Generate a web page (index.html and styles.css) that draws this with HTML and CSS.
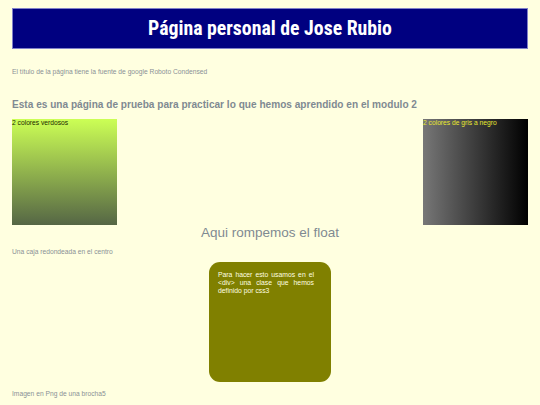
FILE: index.html
```html
<!DOCTYPE html>
<html lang="es">
<head>
<meta charset="utf-8">
<title>Página personal de Jose Rubio</title>
<link rel="stylesheet" href="styles.css">
</head>
<body>
<div class="page">
  <header class="banner"><h1 class="title">Página personal de Jose Rubio</h1></header>
  <p class="note note-top">El título de la página tiene la fuente de google Roboto Condensed</p>
  <h2 class="lead">Esta es una página de prueba para practicar lo que hemos aprendido en el modulo 2</h2>
  <div class="boxes">
    <div class="box box-green">2 colores verdosos</div>
    <div class="box box-gray">2 colores de gris a negro</div>
  </div>
  <h3 class="break">Aqui rompemos el float</h3>
  <p class="note note-round">Una caja redondeada en el centro</p>
  <div class="rounded">Para hacer esto usamos en el &lt;div&gt; una clase que hemos definido por css3</div>
  <p class="note note-bottom">Imagen en Png de una brocha5</p>
</div>
</body>
</html>
```
FILE: styles.css
```css
html, body {
  margin: 0;
  padding: 0;
  background: #ffffe0;
}
body {
  font-family: "Liberation Sans", Arial, sans-serif;
  color: #7f8c8d;
}
.page {
  padding: 8px 12px 0 12px;
}
.banner {
  background: #000080;
  height: 41px;
  box-sizing: border-box;
  border: 1px solid #8080c8;
  display: flex;
  align-items: center;
  justify-content: center;
}
.title {
  margin: 0;
  color: #ffffff;
  font-family: "Roboto Condensed", "Liberation Sans Narrow", Roboto, sans-serif;
  font-weight: 700;
  font-size: 19.8px;
  line-height: 1;
}
.note {
  margin: 0;
  font-size: 6.7px;
  line-height: 8px;
  color: #8a9196;
}
.note-top {
  margin-top: 19px;
}
.lead {
  margin: 22px 0 0 0;
  font-size: 10.1px;
  line-height: 14px;
  font-weight: 700;
  color: #7f8a92;
}
.boxes {
  margin-top: 7px;
  display: flex;
  justify-content: space-between;
}
.box {
  width: 105px;
  height: 106px;
  box-sizing: border-box;
  font-size: 6.7px;
  line-height: 8px;
}
.box-green {
  background: linear-gradient(to bottom, #ccff55, #556645);
  color: #1a2a00;
}
.box-gray {
  background: linear-gradient(to right, #777777, #000000);
  color: #e8e830;
}
.break {
  margin: 0;
  text-align: center;
  font-weight: 400;
  font-size: 13.5px;
  line-height: 15px;
  color: #7f8a92;
}
.note-round {
  margin-top: 8px;
}
.rounded {
  margin: 6px auto 0 auto;
  width: 96px;
  height: 105px;
  padding: 9px 17px 6px 9px;
  background: #808000;
  border-radius: 11px;
  color: #ffffe0;
  font-size: 6.8px;
  line-height: 8px;
  text-align: justify;
}
.note-bottom {
  margin-top: 8px;
}
```
